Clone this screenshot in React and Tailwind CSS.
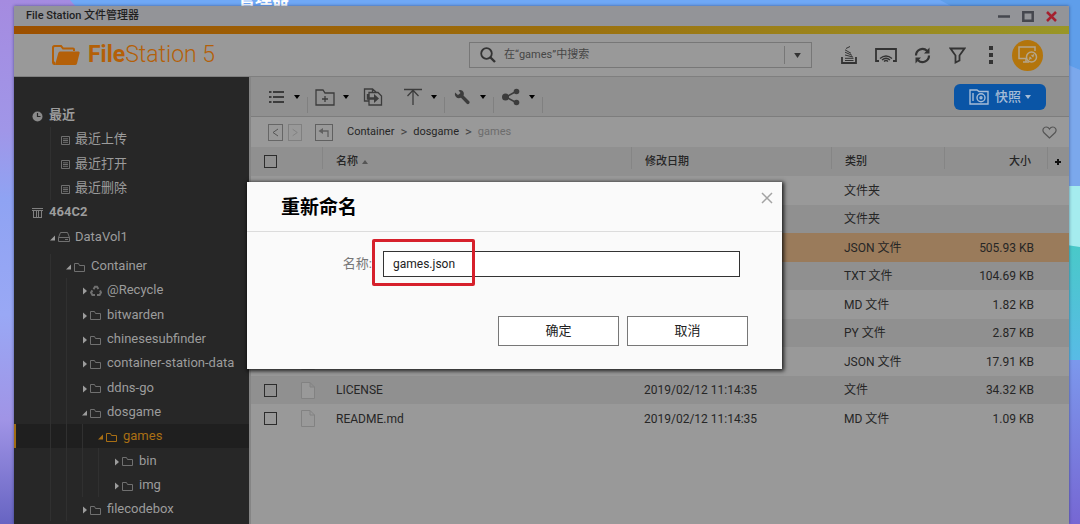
// src/App.jsx
import { useState } from "react";

const recents = ["最近上传", "最近打开", "最近删除"];

const tree = [
  { name: "Container", level: 1, icon: "folder", open: true },
  { name: "@Recycle", level: 2, icon: "recycle" },
  { name: "bitwarden", level: 2, icon: "folder" },
  { name: "chinesesubfinder", level: 2, icon: "folder" },
  { name: "container-station-data", level: 2, icon: "folder" },
  { name: "ddns-go", level: 2, icon: "folder" },
  { name: "dosgame", level: 2, icon: "folder", open: true },
  { name: "games", level: 3, icon: "folder", open: true, active: true },
  { name: "bin", level: 4, icon: "folder" },
  { name: "img", level: 4, icon: "folder" },
  { name: "filecodebox", level: 2, icon: "folder" },
];

const files = [
  { type: "文件夹" },
  { type: "文件夹" },
  { type: "JSON 文件", size: "505.93 KB", selected: true },
  { type: "TXT 文件", size: "104.69 KB" },
  { type: "MD 文件", size: "1.82 KB" },
  { type: "PY 文件", size: "2.87 KB" },
  { type: "JSON 文件", size: "17.91 KB" },
  { name: "LICENSE", date: "2019/02/12 11:14:35", type: "文件", size: "34.32 KB" },
  { name: "README.md", date: "2019/02/12 11:14:35", type: "MD 文件", size: "1.09 KB" },
];

function Wallpaper() {
  return (
    <svg className="absolute inset-0 w-full h-full" viewBox="0 0 1080 524" preserveAspectRatio="none" aria-hidden="true">
      <defs>
        <linearGradient id="left" x1="0" y1="0" x2="0" y2="1">
          <stop offset="0" stopColor="#a58be0" />
          <stop offset="0.25" stopColor="#a096e8" />
          <stop offset="0.38" stopColor="#8fa3f3" />
          <stop offset="0.6" stopColor="#99a8f5" />
          <stop offset="0.8" stopColor="#a094e6" />
          <stop offset="1" stopColor="#6764c2" />
        </linearGradient>
        <linearGradient id="teal" x1="0" y1="0" x2="0" y2="1">
          <stop offset="0" stopColor="#49c9c8" />
          <stop offset="1" stopColor="#58bbe6" />
        </linearGradient>
        <linearGradient id="violet" x1="0" y1="0" x2="0" y2="1">
          <stop offset="0" stopColor="#7c98ec" />
          <stop offset="1" stopColor="#7667d3" />
        </linearGradient>
      </defs>
      <rect width="1080" height="524" fill="#6fa8f6" />
      <path d="M0 0H70L77 8V524H0Z" fill="url(#left)" />
      <path d="M940 0H1080V70Q1010 40 940 0Z" fill="#5f9eea" />
      <path d="M1060 62L1080 70V186H1060Z" fill="#7ba8ec" />
      <rect x="1060" y="186" width="20" height="64" fill="#a5ecee" />
      <path d="M1060 244L1080 247V360H1060Z" fill="url(#teal)" />
      <rect x="1060" y="360" width="20" height="164" fill="url(#violet)" />
    </svg>
  );
}

function Caret({ className = "" }) {
  return (
    <svg className={`w-1.5 h-1 shrink-0 ${className}`} viewBox="0 0 6 4" fill="currentColor">
      <path d="M0 0H6L3 4Z" />
    </svg>
  );
}

function TreeIcon({ type }) {
  if (type === "recycle") {
    return (
      <svg className="w-3 h-3" viewBox="0 0 12 12" fill="none" stroke="currentColor" strokeWidth="2">
        <path d="M3.5 4.2L5 1.7H7L8.4 4M10 5.5L11 7.6L9.6 10H7M5 10H2.4L1 7.6L2.4 5.4" />
      </svg>
    );
  }
  if (type === "drive") {
    return (
      <svg className="w-3 h-3" viewBox="0 0 12 12" fill="none" stroke="currentColor">
        <path d="M0.5 6.5L2.5 1.5H9.5L11.5 6.5V10.5H0.5ZM0.5 6.5H11.5M7 8.5H10" />
      </svg>
    );
  }
  if (type === "list") {
    return (
      <svg className="w-3 h-3" viewBox="0 0 12 12" fill="none" stroke="currentColor">
        <path d="M3.5 2.5H11.5V10.5H3.5ZM5 4.8H10M5 6.5H10M5 8.3H10" />
      </svg>
    );
  }
  return (
    <svg className="w-3 h-3" viewBox="0 0 12 12" fill="none" stroke="currentColor">
      <path d="M0.5 10.5V2.5H4.5L5.5 4.5H10.5V10.5Z" />
    </svg>
  );
}

function TreeRow({ name, level, icon, open, active, noCaret }) {
  return (
    <li
      className={`flex items-center h-6 nth-[3n]:h-[25px] ${
        active ? "bg-[#1f1f1f] border-l-2 border-[#a06c14] pl-[34px] text-[#a96f14]" : "pl-9 text-[#9c9c9c]"
      }`}
    >
      {Array.from({ length: level }).map((_, i) => (
        <span key={i} className="w-4 self-stretch border-l border-[#303030] shrink-0" />
      ))}
      {noCaret ? (
        <span className="w-2 self-stretch border-l border-[#303030]" />
      ) : (
        <svg className="w-2 h-2 mt-0.5 shrink-0" viewBox="0 0 8 8" fill="currentColor">
          {open ? <path d="M5 1.5V6.5H0Z" /> : <path d="M1 0.5L5 4L1 7.5Z" />}
        </svg>
      )}
      <span className={`mt-px mr-[5px] ${active ? "" : "text-[#707070]"}`}>
        <TreeIcon type={icon} />
      </span>
      <a href="#" className="whitespace-nowrap">{name}</a>
    </li>
  );
}

function Sidebar() {
  return (
    <nav className="w-[235px] shrink-0 bg-[#272727] pt-[26px] text-[13px] leading-5 overflow-hidden">
      <ul>
        <li className="flex items-center h-6 pl-[18px] gap-1.5 text-[#9c9c9c] font-bold">
          <svg className="w-[11px] h-[11px] mt-0.5" viewBox="0 0 11 11">
            <circle cx="5.5" cy="5.5" r="5" fill="#8a8a8a" />
            <path d="M5.5 2V5.5H8.5" fill="none" stroke="#272727" strokeWidth="1.2" />
          </svg>
          最近
        </li>
        {recents.map((name) => (
          <TreeRow key={name} name={name} level={0} icon="list" noCaret />
        ))}
        <li className="flex items-center h-6 pl-[18px] gap-1.5 text-[#9c9c9c] font-bold">
          <svg className="w-[11px] h-[11px]" viewBox="0 0 11 11" fill="none" stroke="#808080">
            <path d="M0 1.5H11M0 3.5H11M1.5 4V11M4.5 4V11M6.5 4V11M9.5 4V11M1 10.5H10" />
          </svg>
          464C2
        </li>
        <TreeRow name="DataVol1" level={0} icon="drive" open />
      </ul>
      <ul className="pt-[5px]">
        {tree.map((item) => (
          <TreeRow key={item.name} {...item} />
        ))}
      </ul>
    </nav>
  );
}

function Header() {
  return (
    <header className="flex items-center h-[43px] pl-[38px] pr-[26px] bg-[#999999] border-b border-[#7f7f7f] text-[#333333]">
      <svg className="w-7 h-[22px]" viewBox="0 0 28 22" fill="#b46008">
        <path d="M2.5 1H9.5L11.5 3.5H21Q23 3.5 23 5.5V7H21V5.5H10.6L8.6 3H2.8Q2 3 2 4V17L3.5 19L3 21H2Q0 20.5 0 18.5V3.5Q0 1 2.5 1Z" />
        <path d="M8 7.5H26.5Q28 7.5 27.6 9L25 19.5Q24.6 21 23 21H3L6.3 9Q6.7 7.5 8 7.5Z" />
      </svg>
      <h1 className="ml-2 text-[23px] leading-7 font-light text-[#b46008] whitespace-nowrap">
        <span className="font-bold">File</span>Station 5
      </h1>

      <div className="ml-auto w-[343px] h-[26px] flex items-center border border-[#777777]">
        <svg className="w-4 h-4 ml-2.5" viewBox="0 0 16 16" fill="none" stroke="currentColor" strokeWidth="1.8">
          <circle cx="6.5" cy="6.5" r="5.3" />
          <path d="M10.5 10.5L15 15" strokeWidth="2.4" />
        </svg>
        <input
          type="text"
          aria-label="搜索"
          placeholder="在“games”中搜索"
          className="flex-1 min-w-0 ml-2 bg-transparent text-[11px] outline-none placeholder:text-[#464646]"
        />
        <button aria-label="搜索选项" className="w-[27px] h-[18px] pr-0.5 flex items-center justify-center border-l border-[#777777]">
          <svg className="w-[7px] h-[5px]" viewBox="0 0 8 6" fill="currentColor">
            <path d="M0 0H8L4 6Z" />
          </svg>
        </button>
      </div>

      <div className="flex items-center ml-[18px]">
        <button aria-label="任务" className="w-[37px] flex justify-center">
          <svg className="w-4 h-[18px]" viewBox="0 0 16 18" fill="none" stroke="currentColor">
            <path d="M1 11V17H15V11" strokeWidth="1.8" />
            <path d="M4 14.5H12.5M4 12.3H12.5M4 9L12 11M4 6.2L11 9.3M4 3.8L10 7.3M5 2.5L9 0.5" strokeWidth="1" />
          </svg>
        </button>
        <button aria-label="投放" className="w-[37px] flex justify-center">
          <svg className="w-[22px] h-4" viewBox="0 0 22 16" fill="none" stroke="currentColor">
            <path d="M4 14H1V2H21V14H18" strokeWidth="1.8" />
            <path d="M5 11.5Q11 6.5 17 11.5M7 13Q11 9.5 15 13M9 14.5Q11 12.5 13 14.5" strokeWidth="1.3" />
          </svg>
        </button>
        <button aria-label="刷新" className="w-[37px] flex justify-center">
          <svg className="w-[17px] h-[17px]" viewBox="0 0 17 17" fill="none" stroke="currentColor" strokeWidth="2.2">
            <path d="M2 8.5A6.5 6.5 0 0 1 13 3.8M15 8.5A6.5 6.5 0 0 1 4 13.2" />
            <path d="M15.5 0.5V6.5H10ZM1.5 16.5V10.5H7Z" fill="currentColor" stroke="none" />
          </svg>
        </button>
        <button aria-label="筛选" className="w-[33px] flex justify-center">
          <svg className="w-[17px] h-[17px]" viewBox="0 0 17 17" fill="none" stroke="currentColor" strokeWidth="1.8">
            <path d="M1.5 1.5H15.5L10.5 8.5V13.5L6.5 15.5V8.5Z" />
          </svg>
        </button>
        <button aria-label="更多" className="w-[33px] flex justify-center">
          <svg className="w-1 h-[18px]" viewBox="0 0 4 18" fill="currentColor">
            <path d="M0 0H4V4H0ZM0 7H4V11H0ZM0 14H4V18H0Z" />
          </svg>
        </button>
        <button aria-label="远程连接" className="ml-[5px] w-[31px] h-[31px] rounded-full bg-[#b3750c] flex items-center justify-center">
          <svg className="w-5 h-5" viewBox="0 0 20 20" fill="none" stroke="#b5a58a" strokeWidth="1.5">
            <path d="M9 13.5H1V2H17V6M5 17H11M8 13.5V17" />
            <circle cx="13.5" cy="12" r="5" />
            <path d="M11 14.5L13 12.5M14 11.5L16 9.5M11.5 12L13.5 14M13.5 10L15.5 12" strokeWidth="1.2" />
          </svg>
        </button>
      </div>
    </header>
  );
}

function Tool({ label, children, className = "" }) {
  return (
    <button aria-label={label} className={`flex items-center gap-2 shrink-0 ${className}`}>
      <svg className="w-5 h-5" viewBox="0 0 20 20" fill="none" stroke="#3c3c3c">
        {children}
      </svg>
      <Caret className="text-black" />
    </button>
  );
}

function Divider() {
  return <span className="w-px h-4 mx-[7px] mt-4 bg-[#808080] shrink-0" />;
}

function Toolbar() {
  return (
    <div className="flex items-center h-10 pl-[15px] pr-[23px] bg-[#909090] border-b border-[#7d7d7d]">
      <Tool label="视图">
        <path d="M7 5H18M7 10H18M7 15H18" strokeWidth="2" />
        <path d="M3 5H5.5M3 10H5.5M3 15H5.5" strokeWidth="2" />
      </Tool>
      <Divider />
      <Tool label="新建文件夹">
        <path d="M1 18V3H8L10 6H19V18ZM10 9V15M7 12H13" strokeWidth="1.3" />
      </Tool>
      <button aria-label="复制" className="ml-3.5">
        <svg className="w-5 h-5" viewBox="0 0 20 20" fill="none" stroke="#3c3c3c" strokeWidth="1.3">
          <path d="M6 14H1.5V2H9.5L13 5M9.5 2V5.5H6V18H18.5V9L15 5.5H9.5" />
          <path d="M5 7V11.5H12" strokeWidth="2.4" />
          <path d="M11 7L16 11.5L11 16Z" fill="#3c3c3c" stroke="none" />
        </svg>
      </button>
      <Tool label="上传" className="ml-5">
        <path d="M1 2.5H19M10 18V3M4.5 9L10 3.3L15.5 9" strokeWidth="1.3" />
      </Tool>
      <Divider />
      <Tool label="工具">
        <path
          d="M3 5.5L6 8L8.5 6L6.5 3.2Q10 2.2 11.5 5Q12.3 7 11.5 8.5L17.5 14.5Q18 16 17 16.8Q15.8 17.5 14.8 16.8L9 10.8Q6 12 4 10Q2.3 8 3 5.5Z"
          fill="#3c3c3c"
          stroke="none"
        />
      </Tool>
      <Divider />
      <Tool label="分享">
        <path d="M15 4.5L5 10L15 15.5" strokeWidth="1.5" />
        <g fill="#3c3c3c" stroke="none">
          <circle cx="4.5" cy="10" r="3.5" />
          <circle cx="15.5" cy="4.5" r="2.8" />
          <circle cx="15.5" cy="15.5" r="2.8" />
        </g>
      </Tool>
      <Divider />
      <button className="ml-auto h-[26px] w-[92px] flex items-center justify-center rounded-md bg-[#0a55a6] text-[#a6bcd6] text-[13px] font-medium">
        <svg className="w-5 h-4 mr-1.5" viewBox="0 0 20 16" fill="none" stroke="currentColor" strokeWidth="1.4">
          <path d="M1 15V1H8L10 2.5H19V15ZM4 4V12" />
          <circle cx="12" cy="8.7" r="4" />
          <circle cx="12" cy="8.7" r="1" />
        </svg>
        快照
        <Caret className="ml-1" />
      </button>
    </div>
  );
}

function Breadcrumb() {
  return (
    <div className="flex items-center h-[30px] pl-[17px] pr-3 bg-[#999999] text-[11px] text-[#262626]">
      <button aria-label="后退" className="w-[15px] h-[17px] border border-[#666666]">
        <svg className="w-full h-full" viewBox="0 0 13 15" fill="none" stroke="#555555">
          <path d="M9 4L4 7.5L9 11" />
        </svg>
      </button>
      <button aria-label="前进" className="ml-[5px] w-[14px] h-[17px] border border-[#808080]">
        <svg className="w-full h-full" viewBox="0 0 13 15" fill="none" stroke="#808080">
          <path d="M4 4L9 7.5L4 11" />
        </svg>
      </button>
      <button aria-label="上一级" className="ml-[13px] w-[18px] h-[17px] border border-[#606060]">
        <svg className="w-full h-full" viewBox="0 0 16 15" fill="none" stroke="#606060" strokeWidth="1.3">
          <path d="M4 6H12V12" />
          <path d="M2.5 6L7 3V9Z" fill="#606060" stroke="none" />
        </svg>
      </button>
      <a href="#" className="ml-3.5">Container</a>
      <span className="mx-1.5 text-[13px] text-[#444444]">&gt;</span>
      <a href="#">dosgame</a>
      <span className="mx-1.5 text-[13px] text-[#444444]">&gt;</span>
      <a href="#" className="text-[#6c6c6c]">games</a>
      <button aria-label="收藏" className="ml-auto">
        <svg className="w-[15px] h-[13px]" viewBox="0 0 15 13" fill="none" stroke="#555555" strokeWidth="1.2">
          <path d="M7.5 12L2 6.8Q0.3 4.8 1.3 2.8Q2.3 1 4.2 1Q6.3 1 7.5 3Q8.7 1 10.8 1Q12.7 1 13.7 2.8Q14.7 4.8 13 6.8Z" />
        </svg>
      </button>
    </div>
  );
}

function Checkbox({ label }) {
  return (
    <input
      type="checkbox"
      aria-label={label}
      className="block appearance-none w-[13px] h-[13px] border border-[#2c2c2c] checked:bg-[#2c2c2c]"
    />
  );
}

function ColumnHead({ children, right, className = "" }) {
  return (
    <th className="p-0 font-medium align-top">
      <div className={`h-[22px] border-l border-[#858585] pt-2 leading-[14px] ${right ? "text-right" : "text-left"} ${className}`}>
        {children}
      </div>
    </th>
  );
}

function FileTable() {
  return (
    <table className="w-full table-fixed border-collapse text-xs text-[#262626]">
      <colgroup>
        <col className="w-[71px]" />
        <col />
        <col className="w-[200px]" />
        <col className="w-[113px]" />
        <col className="w-[103px]" />
        <col className="w-[22px]" />
      </colgroup>
      <thead>
        <tr className="h-[29px] bg-[#909090] text-[11px]">
          <th className="p-0 pl-[13px]">
            <Checkbox label="全选" />
          </th>
          <ColumnHead className="pl-[13px]">
            名称
            <svg className="inline w-1.5 h-1 ml-1" viewBox="0 0 6 4" fill="#555555">
              <path d="M0 4H6L3 0Z" />
            </svg>
          </ColumnHead>
          <ColumnHead className="pl-[13px]">修改日期</ColumnHead>
          <ColumnHead className="pl-[13px]">类别</ColumnHead>
          <ColumnHead right className="pr-4">大小</ColumnHead>
          <ColumnHead className="pl-[7px]">
            <button aria-label="添加列" className="block">
              <svg className="w-1.5 h-3.5" viewBox="0 0 6 14" stroke="#111111" strokeWidth="2">
                <path d="M0 7H6M3 4V10" />
              </svg>
            </button>
          </ColumnHead>
        </tr>
      </thead>
      <tbody>
        {files.map((file, i) => (
          <tr
            key={i}
            className={`h-[29px] even:h-7 ${file.selected ? "bg-[#9a7b5b]" : "bg-[#999999] even:bg-[#909090]"}`}
          >
            <td className="p-0 pl-[13px]">
              <div className="flex items-center gap-6">
                <Checkbox label={file.name || file.type} />
                <svg className="w-3.5 h-[17px]" viewBox="0 0 14 17" fill="#999999" stroke="#828282">
                  <path d="M0.5 0.5H9L13.5 5V16.5H0.5ZM9 0.5V5H13.5" />
                </svg>
              </div>
            </td>
            <td className="p-0 pl-3.5">{file.name}</td>
            <td className="p-0 pl-[13px]">{file.date}</td>
            <td className="p-0 pl-[13px]">{file.type}</td>
            <td className="p-0 pr-[13px] text-right">{file.size}</td>
            <td className="p-0" />
          </tr>
        ))}
      </tbody>
    </table>
  );
}

function RenameDialog() {
  const [name, setName] = useState("games.json");

  return (
    <div
      role="dialog"
      aria-labelledby="rename-title"
      className="absolute left-[233px] top-[176px] w-[535px] bg-[#fafafa] shadow-[1px_1px_4px_1px_rgba(0,0,0,0.8)]"
    >
      <div className="flex items-start justify-between h-[50px] pl-[34px] pr-2 border-b border-[#dcdcdc]">
        <h2 id="rename-title" className="mt-3 text-[19px] leading-7 font-bold text-black">重新命名</h2>
        <button aria-label="关闭" className="mt-2.5">
          <svg className="w-3.5 h-3" viewBox="0 0 14 12" fill="none" stroke="#a3a3a3" strokeWidth="1.5">
            <path d="M2 1L12 11M12 1L2 11" />
          </svg>
        </button>
      </div>
      <form className="pt-[19px] pb-[23px] pr-[34px]" onSubmit={(e) => e.preventDefault()}>
        <div className="relative flex items-center pr-2">
          <label htmlFor="new-name" className="w-[125px] mr-[11px] text-right text-[13px] leading-5 text-[#777777]">名称:</label>
          <input
            id="new-name"
            type="text"
            value={name}
            onChange={(e) => setName(e.target.value)}
            className="flex-1 min-w-0 h-[26px] px-[9px] border border-[#333333] bg-white text-xs text-[#222222] outline-none"
          />
          {/* highlight around the file name */}
          <div className="absolute left-[125px] -top-3 w-[103px] h-[47px] border-3 border-[#d6202b] rounded-xs pointer-events-none" />
        </div>
        <div className="flex justify-end gap-2 mt-[39px] text-[13px] text-[#222222]">
          <button className="w-[121px] h-[30px] border border-[#777777] bg-white">确定</button>
          <button type="button" className="w-[121px] h-[30px] border border-[#777777] bg-white">取消</button>
        </div>
      </form>
    </div>
  );
}

export default function App() {
  return (
    <div className="relative h-screen overflow-hidden pt-1.5 pl-3.5 pr-[11px] font-[Roboto,'Noto_Sans_CJK_SC',sans-serif]">
      <Wallpaper />
      <span className="absolute left-[238px] -top-3 text-[17px] leading-5 font-bold text-white">管理器</span>

      <div className="relative flex flex-col h-full shadow-[0_0_3px_rgba(30,40,80,0.6)]">
        <div className="flex items-center h-5 pl-3 pr-3 bg-[#939498] text-[11px] font-medium text-[#1f1f1f]">
          File Station 文件管理器
          <div className="flex items-center gap-3 ml-auto">
            <button aria-label="最小化">
              <svg className="w-3 h-[11px]" viewBox="0 0 12 11" stroke="#45474e" strokeWidth="2.5">
                <path d="M0 5.5H12" />
              </svg>
            </button>
            <button aria-label="最大化">
              <svg className="w-3 h-[11px]" viewBox="0 0 12 11" fill="none" stroke="#45474e" strokeWidth="2.5">
                <path d="M1.3 1.3H10.7V9.7H1.3Z" />
              </svg>
            </button>
            <button aria-label="关闭窗口">
              <svg className="w-[11px] h-[11px]" viewBox="0 0 11 11" stroke="#a5202e" strokeWidth="2.5">
                <path d="M1 1L10 10M10 1L1 10" />
              </svg>
            </button>
          </div>
        </div>
        <div className="h-2 shrink-0 bg-linear-to-r from-[#9c5000] via-[#9b6e0c] to-[#999627]" />
        <Header />
        <div className="flex flex-1 min-h-0">
          <Sidebar />
          <main className="flex-1 min-w-0 bg-[#999999] border-l-2 border-[#858585]">
            <Toolbar />
            <Breadcrumb />
            <FileTable />
          </main>
        </div>
        <RenameDialog />
      </div>
    </div>
  );
}
